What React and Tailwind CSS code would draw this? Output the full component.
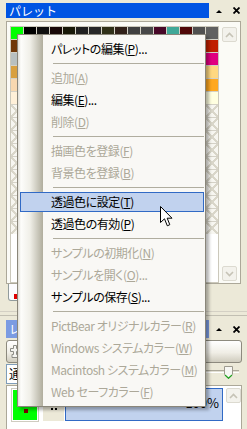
import React from "react";

const row1 = ["#00ff00", "#000000", "#101010", "#180808", "#181808", "#202020", "#282828", "#303018", "#302018", "#404040", "#484848", "#480828", "#40a898", "#500808", "#505050", "#606060"];
const firstCol = ["#703808", "#b8c0c0", "#d8a040", "#f8d8b0", "#fff0d8"];
const lastCol = ["#c02000", "#e00080", "#ffd880", "#ffa820", "#ffffe0"];
const middle = ["#885028", "#a8a8a8", "#c89050", "#f0c8a0", "#f8e8d0"];

const items = [
  { t: "パレットの編集", k: "P", dots: true, on: true },
  "sep",
  { t: "追加", k: "A" },
  { t: "編集", k: "E", dots: true, on: true },
  { t: "削除", k: "D" },
  "sep",
  { t: "描画色を登録", k: "F" },
  { t: "背景色を登録", k: "B" },
  "sep",
  { t: "透過色に設定", k: "T", on: true, hot: true },
  { t: "透過色の有効", k: "P", on: true },
  "sep",
  { t: "サンプルの初期化", k: "N" },
  { t: "サンプルを開く", k: "O", dots: true },
  { t: "サンプルの保存", k: "S", dots: true, on: true },
  "sep",
  { t: "PictBear オリジナルカラー", k: "R" },
  { t: "Windows システムカラー", k: "W" },
  { t: "Macintosh システムカラー", k: "M" },
  { t: "Web セーフカラー", k: "F" },
];

function swatchColor(r, c) {
  if (r === 0) return row1[c];
  if (r <= 5) {
    if (c === 0) return firstCol[r - 1];
    if (c === 15) return lastCol[r - 1];
    return middle[r - 1];
  }
  return null;
}

function Swatches() {
  const cells = [];
  for (let r = 0; r < 16; r++) {
    for (let c = 0; c < 16; c++) {
      const color = swatchColor(r, c);
      cells.push(
        color ? (
          <div key={r * 16 + c} className="h-[12px] w-[12px]" style={{ backgroundColor: color }} />
        ) : (
          <div
            key={r * 16 + c}
            className="h-[12px] w-[12px] bg-[#f7f6f0] bg-[linear-gradient(45deg,transparent_42%,#d9d6c9_42%,#d9d6c9_58%,transparent_58%),linear-gradient(-45deg,transparent_42%,#d9d6c9_42%,#d9d6c9_58%,transparent_58%)]"
          />
        )
      );
    }
  }
  return <div className="grid grid-cols-[repeat(16,12px)] gap-px bg-[#d4d1c6]">{cells}</div>;
}

function Caption({ title, active }) {
  return (
    <div className="flex items-center">
      <div
        className={
          active
            ? "ml-[6px] flex h-[15px] w-[203px] items-center bg-[#0054e3] pl-[3px] text-[12px] text-white"
            : "ml-[6px] flex h-[18px] w-[203px] items-center bg-[#7b9be2] pl-[3px] text-[12px] text-white"
        }
      >
        {title}
      </div>
      <svg width="6" height="4" className="ml-[7px]" viewBox="0 0 6 4">
        <path d="M0 4 L3 1 L6 4 Z" fill="#000" />
      </svg>
      <svg width="7" height="7" className="ml-[11px]" viewBox="0 0 7 7">
        <path d="M0.5 0.5 L6.5 6.5 M6.5 0.5 L0.5 6.5" stroke="#000" strokeWidth="1.8" />
      </svg>
    </div>
  );
}

function ScrollBtn({ down }) {
  return (
    <div className="flex h-[15px] w-[15px] items-center justify-center rounded-[2px] border border-[#dcdad0] bg-[#f3f2ec]">
      <svg width="9" height="6" viewBox="0 0 9 6">
        <path d={down ? "M1 1 L4.5 4.5 L8 1" : "M1 5 L4.5 1.5 L8 5"} stroke="#c6c3b6" strokeWidth="1.6" fill="none" />
      </svg>
    </div>
  );
}

function Menu() {
  return (
    <div className="absolute left-[17px] top-[34px] w-[189px] border border-[#8a867a] bg-[linear-gradient(90deg,#e0ded6_0px,#fdfdfb_3px,#f0efe8_12px,#b0ad9d_25px,#f9f8f5_25px)] py-[3px] text-[12px] tracking-[-0.45px] [font-feature-settings:'palt'] shadow-[3px_3px_3px_rgba(0,0,0,0.3)]">
      {items.map((it, i) =>
        it === "sep" ? (
          <div key={i} className="flex h-[7px] items-center pl-[35px] pr-[1px]">
            <div className="h-px flex-1 bg-[#b0ad9f]" />
          </div>
        ) : (
          <div key={i} className="h-[22px] py-[1px] pl-[2px] pr-[1px]">
            <div
              className={
                (it.hot ? "border-[#316ac5] bg-[#c1d2ee] " : "border-transparent ") +
                "flex h-full items-center whitespace-nowrap border pl-[30px] " +
                (it.on ? "text-black" : "text-[#aca899]")
              }
            >
              {it.t}(<span className="underline underline-offset-1">{it.k}</span>){it.dots ? "..." : ""}
            </div>
          </div>
        )
      )}
    </div>
  );
}

export default function App() {
  return (
    <div className="relative h-[429px] w-[247px] overflow-hidden bg-[#ece9d8] pt-[3px] font-['Noto_Sans_CJK_JP',sans-serif] leading-none">
      <Caption title="パレット" active />

      {/* palette panel */}
      <div className="ml-[6px] mt-[3px] flex h-[263px] w-[235px] border border-[#aca899] bg-[#fbfbf6] pl-[3px] pt-[4px]">
        <div className="w-[209px] border border-[#cbc8bb] bg-white">
          <Swatches />
        </div>
        <div className="flex flex-1 flex-col items-center justify-between pb-[2px] pt-px">
          <ScrollBtn />
          <ScrollBtn down />
        </div>
      </div>

      {/* tabs */}
      <div className="flex h-[17px]">
        <div className="ml-[8px] flex w-[40px] items-end rounded-b-[3px] border-x border-b border-[#919b9c] bg-[#fcfcfe] pb-px pl-[5px]">
          <div className="h-[5px] w-[4px] bg-[#e00000]" />
        </div>
      </div>

      {/* splitter */}
      <div className="mt-[10px] h-[5px] border-t border-[#d4d0c4] border-b border-b-[#c2bfb2]" />
      <div className="h-[4px]" />

      <Caption title="レイヤー" />

      {/* tool button bar */}
      <div className="ml-[6px] mt-[2px] flex h-[23px] w-[236px] items-center rounded-[3px] border border-[#8d8a7e] bg-[linear-gradient(#ffffff,#f0eee6_55%,#cfccbe)] pl-[3px]">
        <svg width="10" height="13" viewBox="0 0 10 13">
          <path d="M3.5 0.5 H6.5 V3.5 H9.5 V6.5 H6.5 V9.5 H8 V12.5 H2 V9.5 H3.5 V6.5 H0.5 V3.5 H3.5 Z" fill="#f4f4f0" stroke="#8c8c86" />
        </svg>
      </div>

      {/* blend mode + opacity */}
      <div className="mt-px flex h-[20px] items-center pl-[6px]">
        <div className="flex h-[20px] w-[100px] items-center border border-[#7f9db9] bg-white pl-[2px] text-[12px] text-black">
          通常
        </div>
        <div className="relative ml-[8px] h-full w-[125px]">
          <div className="mt-[6px] h-[3px] border-y border-t-[#aca899] border-b-white bg-[#e2dfd3]" />
          <svg width="9" height="13" viewBox="0 0 9 13" className="absolute right-[6px] top-[2px]">
            <path d="M0.5 0.5 H8.5 V8.5 L4.5 12.5 L0.5 8.5 Z" fill="#f7f7f3" stroke="#9d9a8e" />
            <path d="M1 9 L4.5 12.3 L8 9" stroke="#21a121" strokeWidth="1.2" fill="none" />
          </svg>
        </div>
      </div>

      {/* layer list */}
      <div className="ml-[6px] mt-px flex h-[60px] w-[236px] border border-[#aca899] bg-white pl-[4px] pt-[2px]">
        <div className="h-[34px] w-[28px] border border-[#cfccc0] bg-white p-px">
          <div className="relative h-full w-full bg-[#00ff00]">
            <div className="absolute left-[11px] top-[19px] h-[4px] w-[4px] bg-[#800000]" />
          </div>
        </div>
        <div className="ml-[4px] flex h-[33px] w-[21px] items-center justify-center gap-[2px] bg-[#ece9d8]">
          <div className="mt-[8px] h-[2px] w-[2px] bg-black" />
          <div className="mt-[8px] h-[2px] w-[2px] bg-black" />
        </div>
        <div className="ml-px flex h-[33px] w-[158px] items-center justify-end border border-[#316ac5] bg-[#c1d2ee] pb-[5px] pr-[3px] text-[13px] text-black">
          100%
        </div>
        <div className="ml-[2px] flex flex-1 justify-center">
          <ScrollBtn />
        </div>
      </div>

      <Menu />

      {/* mouse pointer */}
      <svg width="13" height="21" viewBox="0 0 13 21" className="absolute left-[160px] top-[206px]">
        <path d="M0.5 0.5 V16.5 L4.5 12.8 L7.3 19.8 L9.8 18.7 L7.2 12.2 H12 Z" fill="#fff" stroke="#000" strokeLinejoin="miter" />
      </svg>
    </div>
  );
}
